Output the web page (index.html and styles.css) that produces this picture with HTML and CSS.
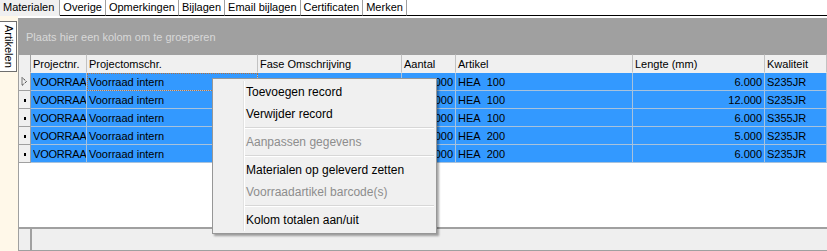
FILE: index.html
```html
<!DOCTYPE html>
<html lang="nl">
<head>
    <meta charset="UTF-8">
    <title>Materialen</title>
    <link rel="stylesheet" href="styles.css">
</head>
<body>
    <div class="tabs">
        <div class="tab active">Materialen</div>
        <div class="tab">Overige</div>
        <div class="tab">Opmerkingen</div>
        <div class="tab">Bijlagen</div>
        <div class="tab">Email bijlagen</div>
        <div class="tab">Certificaten</div>
        <div class="tab">Merken</div>
        <div class="tab-rest"></div>
    </div>

    <div class="main">
        <div class="side">
            <div class="side-tab">Artikelen</div>
        </div>

        <div class="grid">
            <div class="group-panel">Plaats hier een kolom om te groeperen</div>

            <table class="data">
                <thead>
                    <tr>
                        <th class="ind w-ind"></th>
                        <th class="w-nr">Projectnr.</th>
                        <th class="w-oms">Projectomschr.</th>
                        <th class="w-fase">Fase Omschrijving</th>
                        <th class="w-aantal">Aantal</th>
                        <th class="w-art">Artikel</th>
                        <th class="w-len">Lengte (mm)</th>
                        <th class="w-kw">Kwaliteit</th>
                    </tr>
                </thead>
                <tbody>
                    <tr>
                        <td class="ind"><svg width="7" height="9" viewBox="0 0 7 9"><path d="M1 0.5 L1 8.5 L5.5 4.5 Z" fill="none" stroke="#000" stroke-width="1" stroke-dasharray="1 1"/></svg></td>
                        <td class="clip"><span>VOORRAAD</span></td>
                        <td class="focus">Voorraad intern</td>
                        <td></td>
                        <td class="num">1.000</td>
                        <td>HEA&nbsp;&nbsp;100</td>
                        <td class="num">6.000</td>
                        <td>S235JR</td>
                    </tr>
                    <tr>
                        <td class="ind"><span class="dot"></span></td>
                        <td class="clip"><span>VOORRAAD</span></td>
                        <td>Voorraad intern</td>
                        <td></td>
                        <td class="num">1.000</td>
                        <td>HEA&nbsp;&nbsp;100</td>
                        <td class="num">12.000</td>
                        <td>S235JR</td>
                    </tr>
                    <tr>
                        <td class="ind"><span class="dot"></span></td>
                        <td class="clip"><span>VOORRAAD</span></td>
                        <td>Voorraad intern</td>
                        <td></td>
                        <td class="num">1.000</td>
                        <td>HEA&nbsp;&nbsp;100</td>
                        <td class="num">6.000</td>
                        <td>S355JR</td>
                    </tr>
                    <tr>
                        <td class="ind"><span class="dot"></span></td>
                        <td class="clip"><span>VOORRAAD</span></td>
                        <td>Voorraad intern</td>
                        <td></td>
                        <td class="num">1.000</td>
                        <td>HEA&nbsp;&nbsp;200</td>
                        <td class="num">5.000</td>
                        <td>S235JR</td>
                    </tr>
                    <tr>
                        <td class="ind"><span class="dot"></span></td>
                        <td class="clip"><span>VOORRAAD</span></td>
                        <td>Voorraad intern</td>
                        <td></td>
                        <td class="num">1.000</td>
                        <td>HEA&nbsp;&nbsp;200</td>
                        <td class="num">6.000</td>
                        <td>S235JR</td>
                    </tr>
                </tbody>
            </table>

            <div class="empty"></div>

            <div class="footer">
                <div class="footer-ind"></div>
            </div>
        </div>
    </div>

    <div class="menu">
        <div class="menu-item">Toevoegen record</div>
        <div class="menu-item">Verwijder record</div>
        <div class="menu-sep"></div>
        <div class="menu-item disabled">Aanpassen gegevens</div>
        <div class="menu-sep"></div>
        <div class="menu-item">Materialen op geleverd zetten</div>
        <div class="menu-item disabled">Voorraadartikel barcode(s)</div>
        <div class="menu-sep"></div>
        <div class="menu-item">Kolom totalen aan/uit</div>
    </div>
</body>
</html>
```

FILE: styles.css
```css
body {
    margin: 0;
    width: 827px;
    height: 251px;
    overflow: hidden;
    font-family: "Liberation Sans", Arial, sans-serif;
    font-size: 11px;
    color: #000;
    background: #fff;
    position: relative;
}

/* tabbladen */
.tabs {
    display: flex;
    height: 16px;
}

.tab {
    padding: 0 3px 0 3px;
    line-height: 15px;
    border-right: 1px solid #a0a0a0;
    border-bottom: 1px solid #000;
    background: #fff;
}

.tab.active {
    background: #f0f0f0;
    border-bottom-color: #f0f0f0;
    padding: 0 5px 0 3px;
}

.tab-rest {
    flex: 1;
    border-bottom: 1px solid #000;
}

.main {
    display: flex;
    height: 235px;
}

.side {
    width: 18px;
    background: #fff8e9;
    padding-top: 5px;
}

.side-tab {
    writing-mode: vertical-rl;
    width: 16px;
    height: 49px;
    line-height: 15px;
    text-align: center;
    background: #fff;
    border: 1px solid #6e6e6e;
    border-left: none;
    font-size: 11px;
}

.grid {
    flex: 1;
    display: flex;
    flex-direction: column;
    border-left: 1px solid #a0a0a0;
    margin-top: 2px;
}

.group-panel {
    height: 36px;
    background: #a0a0a0;
    color: #d8d8d8;
    line-height: 38px;
    padding-left: 7px;
}

/* tabel */
.data {
    border-collapse: separate;
    border-spacing: 0;
    table-layout: fixed;
    width: 808px;
}

.data th,
.data td {
    box-sizing: border-box;
    padding: 0 2px;
    white-space: nowrap;
    overflow: hidden;
    text-align: left;
    font-weight: normal;
    border-right: 1px solid #c2c2c2;
}

.data th {
    height: 19px;
    background: #f0f0f0;
    border-top: 1px solid #a0a0a0;
    border-bottom: 1px solid #f0f0f0;
    padding-top: 1px;
}

.data td {
    height: 18px;
    background: #3399ff;
    border-bottom: 1px solid #a8c2dc;
    border-right-color: #a8c2dc;
}

.data td.clip span {
    display: block;
    width: 53px;
    overflow: hidden;
    letter-spacing: -0.2px;
}

.data td.ind,
.data th.ind {
    background: #f0f0f0;
    padding: 0;
    text-align: center;
    border-right: 1px solid #a0a0a0;
}

.data td.ind {
    border-bottom: 1px solid #a0a0a0;
}

.data td.num {
    text-align: right;
}

.data td.focus {
    outline: 1px dotted #b07040;
    outline-offset: -1px;
}

.dot {
    display: inline-block;
    width: 2px;
    height: 3px;
    background: #000;
    vertical-align: middle;
}

.w-ind { width: 12px; }
.w-nr { width: 56px; }
.w-oms { width: 171px; }
.w-fase { width: 144px; }
.w-aantal { width: 54px; }
.w-art { width: 177px; }
.w-len { width: 132px; }
.w-kw { width: 62px; }

.empty {
    flex: 1;
    background: #fff;
}

.footer {
    height: 21px;
    background: #efefef;
    border-top: 2px solid #a0a0a0;
    border-bottom: 1px solid #a0a0a0;
    display: flex;
}

.footer-ind {
    width: 11px;
    border-right: 2px solid #a0a0a0;
}

/* contextmenu */
.menu {
    position: absolute;
    left: 212px;
    top: 78px;
    width: 223px;
    padding: 2px 0;
    background: #f0f0f0;
    border: 1px solid #979797;
    box-shadow: 2px 2px 2px rgba(0, 0, 0, 0.35);
    font-size: 12px;
}

.menu::before {
    content: "";
    position: absolute;
    left: 30px;
    top: 2px;
    bottom: 2px;
    border-left: 1px solid #e2e2e2;
    border-right: 1px solid #fff;
}

.menu-item {
    height: 22px;
    line-height: 22px;
    padding-left: 33px;
    color: #000;
}

.menu-item.disabled {
    color: #8d8d8d;
}

.menu-sep {
    height: 6px;
    margin-left: 32px;
    margin-right: 2px;
    position: relative;
}

.menu-sep::after {
    content: "";
    position: absolute;
    left: 0;
    right: 0;
    top: 2px;
    border-top: 1px solid #d7d7d7;
    border-bottom: 1px solid #fff;
}
```
